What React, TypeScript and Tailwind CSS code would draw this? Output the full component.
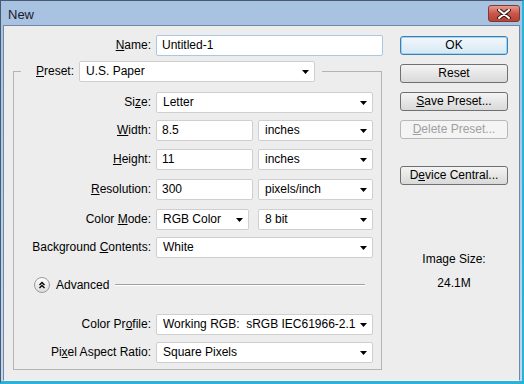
const Arrow = () => (
  <svg width="7" height="4" viewBox="0 0 7 4" className="shrink-0">
    <path d="M0 0 H7 L3.5 4 Z" fill="#000" />
  </svg>
);

const Select = ({ value, className }: { value: string; className: string }) => (
  <div
    className={`${className} h-[21px] bg-white border border-[#cfcfcf] rounded-[2px] flex items-center pl-[6px] pr-[5px]`}
  >
    <span className="flex-1 whitespace-pre overflow-hidden">{value}</span>
    <Arrow />
  </div>
);

const Input = ({ value, className }: { value: string; className: string }) => (
  <div
    className={`${className} h-[21px] bg-white border border-[#cfcfcf] rounded-[2px] flex items-center pl-[5px]`}
  >
    {value}
  </div>
);

const Row = ({
  label,
  className,
  children,
}: {
  label: React.ReactNode;
  className: string;
  children: React.ReactNode;
}) => (
  <div className={`flex items-center ${className}`}>
    <div className="w-[137px] text-right whitespace-nowrap">{label}</div>
    <div className="ml-[5px] flex items-center">{children}</div>
  </div>
);

const Button = ({
  children,
  className,
  variant = "normal",
}: {
  children: React.ReactNode;
  className: string;
  variant?: "normal" | "default" | "disabled";
}) => {
  const look =
    variant === "default"
      ? "border-[#3c7fb1] shadow-[inset_0_0_0_1px_#9fd3f3] bg-gradient-to-b from-[#f2f7fb] to-[#d6e8f4] text-black"
      : variant === "disabled"
        ? "border-[#b8b8b8] bg-[#f4f4f4] text-[#a0a0a0]"
        : "border-[#707070] bg-gradient-to-b from-[#f4f4f4] to-[#d9d9d9] text-black";
  return (
    <div
      className={`${className} w-[108px] h-[19px] border rounded-[3px] flex items-center justify-center ${look}`}
    >
      {children}
    </div>
  );
};

const App = () => {
  return (
    <div className="w-[524px] h-[384px] flex flex-col bg-gradient-to-b from-[#a7c1e0] to-[#c3d7ee] border border-[#49596f] border-r-[#2ab2d8] border-b-[#2ab2d8] border-r-[2px] border-b-[3px] font-['Liberation_Sans',Arial,sans-serif] text-[12px] text-black leading-[15px]">
      {/* Title bar */}
      <div className="h-[24px] flex items-center justify-between pl-[7px] pr-[2px]">
        <span className="text-[13px] text-[#1a1a2e] mt-[2px]">New</span>
        <div className="w-[32px] h-[17px] mt-[1px] rounded-[3px] border border-[#7a3a36] bg-gradient-to-b from-[#e59a8e] via-[#c9574a] to-[#b84233] flex items-center justify-center">
          <svg width="14" height="10" viewBox="0 0 14 10">
            <path d="M2 1 L12 9 M12 1 L2 9" stroke="#3a1a1a" strokeWidth="4" strokeLinecap="round" />
            <path d="M2 1 L12 9 M12 1 L2 9" stroke="#fff" strokeWidth="2" strokeLinecap="round" />
          </svg>
        </div>
      </div>

      {/* Body */}
      <div className="flex-1 mx-[2px] bg-[#ededed] border border-[#6e88a8] border-b-[#f7f7f7] flex">
        {/* Left column */}
        <div className="w-[388px] flex flex-col">
          <div className="flex items-center mt-[9px]">
            <div className="w-[147px] text-right">
              <u>N</u>ame:
            </div>
            <div className="ml-[5px] w-[227px] h-[21px] bg-white border border-[#a8c8e6] rounded-[2px] flex items-center pl-[5px]">
              Untitled-1
            </div>
          </div>

          <fieldset className="ml-[9px] mt-[5px] w-[369px] border border-[#b4b4b4] pb-[6px]">
            <legend className="ml-[7px] pl-[15px] pr-[7px]">
              <div className="flex items-center">
                <span className="w-[43px]">
                  <u>P</u>reset:
                </span>
                <Select value="U.S. Paper" className="w-[236px]" />
              </div>
            </legend>

            <Row className="mt-[10px]" label={<>Si<u>z</u>e:</>}>
              <Select value="Letter" className="w-[217px]" />
            </Row>
            <Row className="mt-[7px]" label={<><u>W</u>idth:</>}>
              <Input value="8.5" className="w-[97px]" />
              <Select value="inches" className="w-[115px] ml-[5px]" />
            </Row>
            <Row className="mt-[8px]" label={<><u>H</u>eight:</>}>
              <Input value="11" className="w-[97px]" />
              <Select value="inches" className="w-[115px] ml-[5px]" />
            </Row>
            <Row className="mt-[9px]" label={<><u>R</u>esolution:</>}>
              <Input value="300" className="w-[97px]" />
              <Select value="pixels/inch" className="w-[115px] ml-[5px]" />
            </Row>
            <Row className="mt-[9px]" label={<>Color <u>M</u>ode:</>}>
              <Select value="RGB Color" className="w-[93px]" />
              <Select value="8 bit" className="w-[115px] ml-[9px]" />
            </Row>
            <Row className="mt-[7px]" label={<>Background <u>C</u>ontents:</>}>
              <Select value="White" className="w-[217px]" />
            </Row>

            {/* Advanced */}
            <div className="flex items-center mt-[19px] h-[16px]">
              <div className="ml-[20px] w-[16px] h-[16px] rounded-full border border-[#9a9a9a] bg-gradient-to-b from-[#ffffff] to-[#dcdcdc] flex items-center justify-center">
                <svg width="8" height="8" viewBox="0 0 8 8">
                  <path d="M1.5 4 L4 1.5 L6.5 4 M1.5 7 L4 4.5 L6.5 7" stroke="#000" strokeWidth="1.3" fill="none" />
                </svg>
              </div>
              <span className="ml-[6px]">Advanced</span>
              <div className="flex-1 ml-[6px] mr-[16px] h-[2px] border-t border-[#a0a0a0] border-b border-b-white" />
            </div>

            <Row className="mt-[21px]" label={<>Color Pr<u>o</u>file:</>}>
              <Select value="Working RGB:  sRGB IEC61966-2.1" className="w-[217px]" />
            </Row>
            <Row className="mt-[7px]" label={<>Pi<u>x</u>el Aspect Ratio:</>}>
              <Select value="Square Pixels" className="w-[217px]" />
            </Row>
          </fieldset>
        </div>

        {/* Right column */}
        <div className="ml-[8px] w-[108px] flex flex-col items-center">
          <Button className="mt-[10px]" variant="default">OK</Button>
          <Button className="mt-[9px]">Reset</Button>
          <Button className="mt-[9px]">
            <span><u>S</u>ave Preset...</span>
          </Button>
          <Button className="mt-[9px]" variant="disabled">
            <span><u>D</u>elete Preset...</span>
          </Button>
          <Button className="mt-[27px]">
            <span>D<u>e</u>vice Central...</span>
          </Button>
          <div className="mt-[67px]">Image Size:</div>
          <div className="mt-[9px]">24.1M</div>
        </div>
      </div>
    </div>
  );
};

export default App;
